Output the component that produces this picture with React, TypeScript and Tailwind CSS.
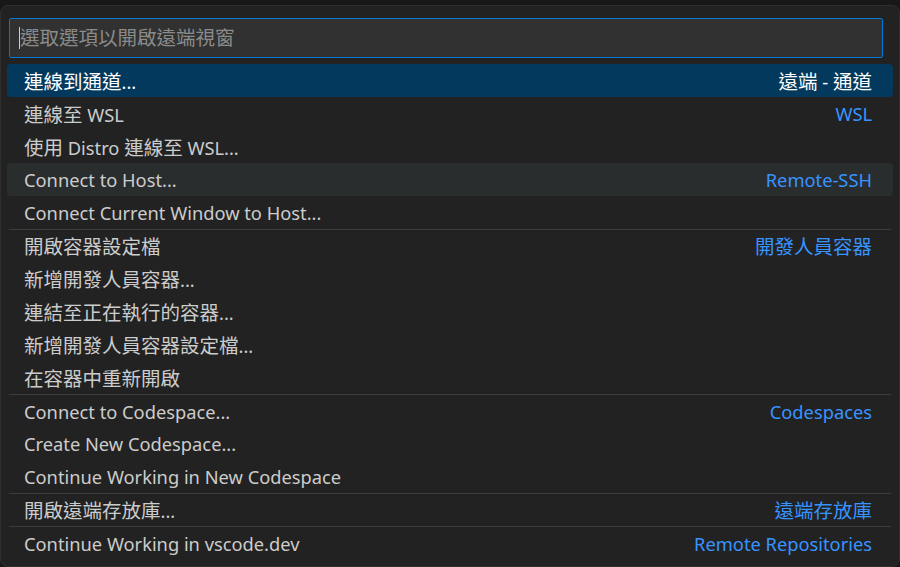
import React from "react";

type Item = { label: string; desc?: string; sep?: boolean; state?: "sel" | "hover" };

const items: Item[] = [
  { label: "連線到通道...", desc: "遠端 - 通道", state: "sel" },
  { label: "連線至 WSL", desc: "WSL" },
  { label: "使用 Distro 連線至 WSL..." },
  { label: "Connect to Host...", desc: "Remote-SSH", sep: true, state: "hover" },
  { label: "Connect Current Window to Host..." },
  { label: "開啟容器設定檔", desc: "開發人員容器", sep: true },
  { label: "新增開發人員容器..." },
  { label: "連結至正在執行的容器..." },
  { label: "新增開發人員容器設定檔..." },
  { label: "在容器中重新開啟" },
  { label: "Connect to Codespace...", desc: "Codespaces", sep: true },
  { label: "Create New Codespace..." },
  { label: "Continue Working in New Codespace" },
  { label: "開啟遠端存放庫...", desc: "遠端存放庫", sep: true },
  { label: "Continue Working in vscode.dev", desc: "Remote Repositories", sep: true },
];

const font = {
  fontFamily: '"Noto Sans", "Noto Sans CJK TC", sans-serif',
};

function Mixed({ text }: { text: string }) {
  const parts = text.split(/([\u3000-\u9fff\uff00-\uffef]+)/).filter((p) => p.length > 0);
  return (
    <>
      {parts.map((p, i) =>
        /[\u3000-\u9fff\uff00-\uffef]/.test(p) ? (
          <span key={i} className="text-[19.5px]">
            {p}
          </span>
        ) : (
          <span key={i} className="text-[18.3px]">
            {p}
          </span>
        )
      )}
    </>
  );
}

export default function App() {
  return (
    <div className="w-[900px] h-[567px] bg-[#181818] pt-[5px] overflow-hidden" style={font}>
      <div className="w-[900px] h-[562px] bg-[#222222] border border-[#2f2f2f] rounded-[8px] pt-[12px] pl-[8px]">
        <div className="w-[874px] h-[40px] bg-[#313131] border border-[#0078d4] rounded-[2px] flex items-center pl-[9px]">
          <span className="w-px h-[22px] bg-[#cccccc]" />
          <span className="text-[19.5px] text-[#8b8b8b] leading-none">選取選項以開啟遠端視窗</span>
        </div>
        <div className="mt-[6px] -ml-[2px] w-[886px] flex flex-col">
          {items.map((it, i) => (
            <div
              key={i}
              className={
                "h-[33px] rounded-[4px] " +
                (it.state === "sel" ? "bg-[#04395e]" : it.state === "hover" ? "bg-[#2a2d2e]" : "")
              }
            >
              <div
                className={
                  "h-full mx-[2px] flex items-center justify-between pl-[15px] pr-[19px] pt-[2px] leading-none " +
                  (it.sep && it.state !== "hover" ? "border-t border-[#3c3c3c]" : "")
                }
              >
                <span className={it.state === "sel" ? "text-white" : "text-[#cccccc]"}>
                  <Mixed text={it.label} />
                </span>
                {it.desc && (
                  <span className={it.state === "sel" ? "text-white" : "text-[#3794ff]"}>
                    <Mixed text={it.desc} />
                  </span>
                )}
              </div>
            </div>
          ))}
        </div>
      </div>
    </div>
  );
}
